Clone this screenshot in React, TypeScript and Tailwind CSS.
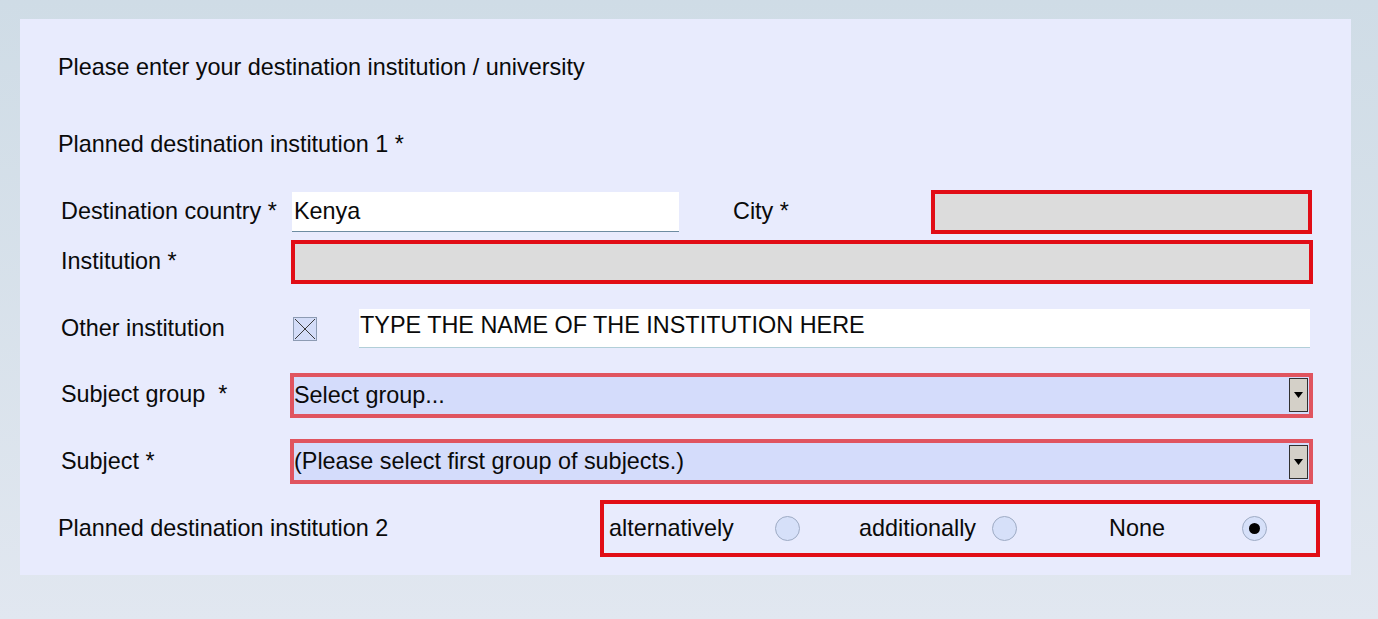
import React from "react";

function Radio({ checked }: { checked?: boolean }) {
  return (
    <span className="flex h-[25px] w-[25px] shrink-0 items-center justify-center rounded-full border border-[#9eabc4] bg-[#d6e0f9]">
      {checked && <span className="h-[11px] w-[11px] rounded-full bg-black" />}
    </span>
  );
}

function SelectBox({ text }: { text: string }) {
  return (
    <div className="ml-[-1px] flex h-[45px] w-[1023px] items-center border-[4px] border-[#e0545f] bg-[#d4dcfb] pl-[0px] pr-[1px]">
      <span className="flex-1 whitespace-nowrap leading-[1.2]">{text}</span>
      <span className="flex h-[34px] w-[19px] items-center justify-center border border-[#303030] bg-[#d4d0c8]">
        <svg width="9" height="6" viewBox="0 0 9 6">
          <path d="M0 0 L9 0 L4.5 6 Z" fill="#000" />
        </svg>
      </span>
    </div>
  );
}

export default function App() {
  return (
    <div
      className="h-[619px] w-[1378px] overflow-hidden bg-gradient-to-b from-[#cfdce6] to-[#e1e7f0] pt-[19px] pl-[20px] text-[23.4px] leading-none text-[#0a0a0a]"
      style={{ fontFamily: '"Liberation Sans", Arial, sans-serif' }}
    >
      <div className="h-[556px] w-[1331px] bg-[#e8ebfd] pt-[31px]">
        <div className="flex h-[35px] items-center pl-[38px]">
          Please enter your destination institution / university
        </div>
        <div className="mt-[42px] flex h-[35px] items-center pl-[38px]">
          Planned destination institution 1 *
        </div>

        {/* Country / City */}
        <div className="mt-[28px] flex h-[44px] items-center pl-[41px]">
          <span className="w-[231px] shrink-0">Destination country *</span>
          <div className="flex h-[40px] w-[387px] items-center border-b border-[#6d8ca2] bg-white pl-[2px]">
            Kenya
          </div>
          <span className="ml-[54px] w-[198px] shrink-0">City *</span>
          <div className="h-[44px] w-[381px] border-[4px] border-[#e10d16] bg-[#dcdcdc]" />
        </div>

        {/* Institution */}
        <div className="mt-[6px] flex h-[44px] items-center pl-[41px]">
          <span className="w-[231px] shrink-0">Institution *</span>
          <div className="ml-[-1px] h-[44px] w-[1022px] border-[4px] border-[#e10d16] bg-[#dcdcdc]" />
        </div>

        {/* Other institution */}
        <div className="mt-[25px] flex h-[39px] items-center pl-[41px]">
          <span className="w-[232px] shrink-0">Other institution</span>
          <span className="flex h-[24px] w-[24px] shrink-0 items-center justify-center border border-[#8d9bb3] bg-[#d3dcf8]">
            <svg width="22" height="22" viewBox="0 0 22 22">
              <path d="M1 1 L21 21 M21 1 L1 21" stroke="#3a3a3a" strokeWidth="1" />
            </svg>
          </span>
          <div className="ml-[42px] flex h-[39px] w-[951px] items-center border-b border-[#b2cfd8] bg-white pl-[1px] pb-[4px]">
            TYPE THE NAME OF THE INSTITUTION HERE
          </div>
        </div>

        {/* Subject group */}
        <div className="mt-[25px] flex h-[44px] items-center pl-[41px]">
          <span className="w-[230px] shrink-0 whitespace-pre">Subject group  *</span>
          <SelectBox text="Select group..." />
        </div>

        {/* Subject */}
        <div className="mt-[22px] flex h-[45px] items-center pl-[41px]">
          <span className="w-[230px] shrink-0">Subject *</span>
          <SelectBox text="(Please select first group of subjects.)" />
        </div>

        {/* Planned 2 */}
        <div className="mt-[16px] flex h-[57px] items-center pl-[38px]">
          <span className="w-[542px] shrink-0">Planned destination institution 2</span>
          <div className="flex h-[57px] w-[720px] items-center border-[4px] border-[#e10d16] pl-[5px]">
            <span className="w-[166px] shrink-0">alternatively</span>
            <Radio />
            <span className="ml-[59px] w-[133px] shrink-0">additionally</span>
            <Radio />
            <span className="ml-[92px] w-[133px] shrink-0">None</span>
            <Radio checked />
          </div>
        </div>
      </div>
    </div>
  );
}
